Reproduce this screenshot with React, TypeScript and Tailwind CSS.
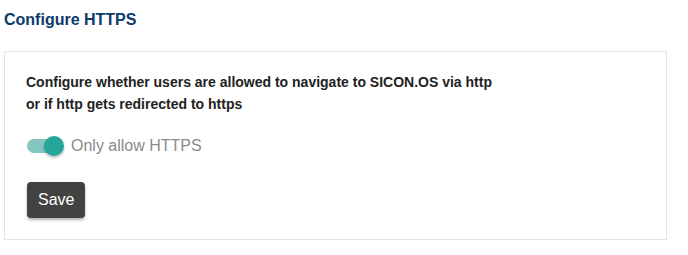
export default function App() {
  return (
    <div className="w-[688px] h-[255px] bg-white" style={{ fontFamily: '"Liberation Sans", Arial, sans-serif' }}>
      <h2 className="pt-[8px] pl-[4px] text-[16px] leading-[24px] font-bold text-[#0b3a6b]">Configure HTTPS</h2>
      <div className="mt-[19px] ml-[4px] w-[663px] border border-[#e4e4e4] pt-[19px] pb-[21px] pl-[21px]">
        <p className="text-[14px] leading-[22px] font-bold text-[#222]">
          Configure whether users are allowed to navigate to SICON.OS via http
          <br />
          or if http gets redirected to https
        </p>
        <label className="mt-[19px] flex items-center h-[24px] cursor-pointer">
          <span className="relative ml-[1px] w-[36px] h-[14px] rounded-full bg-[#84c7c1]">
            <span className="absolute top-[-3px] left-[17px] w-[20px] h-[20px] rounded-full bg-[#26a69a] shadow-[0_2px_3px_rgba(0,0,0,0.25)]" />
          </span>
          <span className="ml-[8px] text-[16px] text-[#8a8a8a]">Only allow HTTPS</span>
        </label>
        <button className="mt-[24px] ml-[1px] h-[36px] px-[11px] rounded-[4px] bg-[#424242] text-white text-[16px] shadow-[0_2px_3px_rgba(0,0,0,0.3)]">
          Save
        </button>
      </div>
    </div>
  );
}
